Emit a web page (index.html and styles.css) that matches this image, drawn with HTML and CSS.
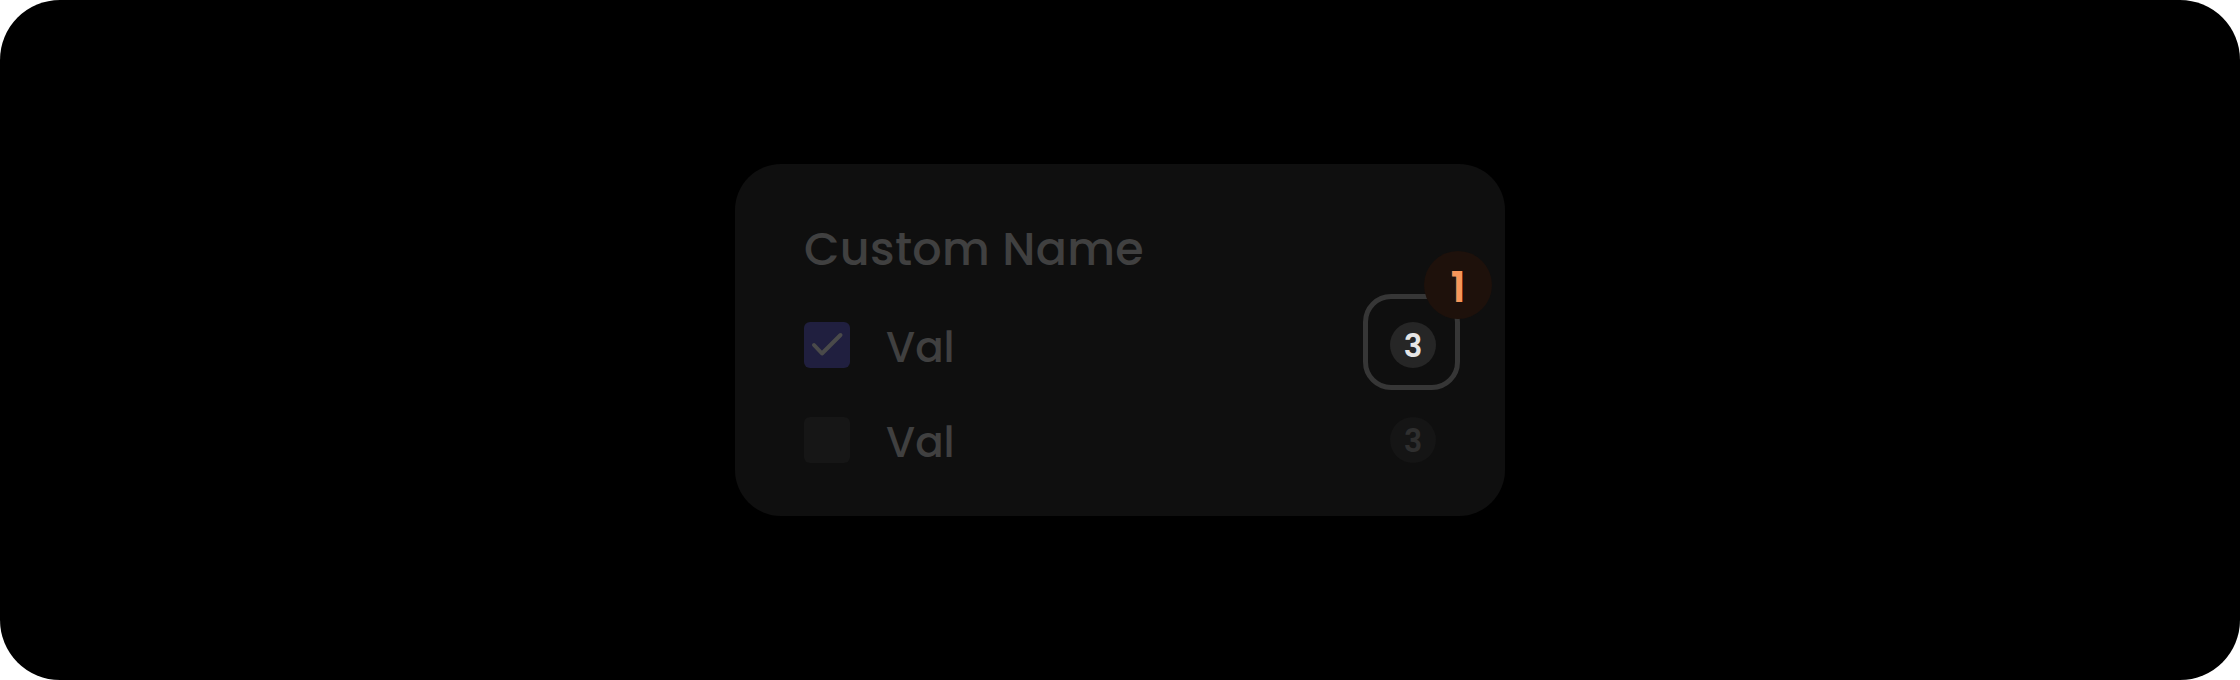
FILE: index.html
```html
<!DOCTYPE html>
<html lang="en">
<head>
  <meta charset="UTF-8" />
  <meta name="viewport" content="width=device-width, initial-scale=1.0"/>
  <title>Custom Name</title>
  <link rel="stylesheet" href="styles.css">
</head>
<body>
  <div class="frame">
    <section class="card">
      <h2 class="card-title">Custom Name</h2>

      <div class="option">
        <span class="check checked">
          <svg viewBox="0 0 46 46" width="46" height="46">
            <path d="M10 23 L18 31.5 L36.5 13" fill="none" stroke="#4a4a4a" stroke-width="4" stroke-linecap="round" stroke-linejoin="round"/>
          </svg>
        </span>
        <span class="option-label">Val</span>
        <span class="count focused">3<span class="badge">1</span></span>
      </div>

      <div class="option">
        <span class="check"></span>
        <span class="option-label">Val</span>
        <span class="count muted">3</span>
      </div>
    </section>
  </div>
</body>
</html>
```

FILE: styles.css
```css
:root {
  --frame: #000;
  --card: #0f0f0f;
  --text: #404040;
  --checked: #201f3f;
  --unchecked: #161616;
}

html, body {
  margin: 0;
  background: #fff;
}

body {
  font-family: 'Poppins', 'Inter', sans-serif;
}

.frame {
  width: 2240px;
  height: 680px;
  background: var(--frame);
  border-radius: 60px;
  display: flex;
  align-items: center;
  justify-content: center;
}

.card {
  width: 770px;
  height: 352px;
  box-sizing: border-box;
  padding: 62px 69px 0;
  background: var(--card);
  border-radius: 46px;
  display: flex;
  flex-direction: column;
}

.card-title {
  margin: 0 0 50px;
  font-size: 46px;
  font-weight: 500;
  line-height: 1;
  color: var(--text);
  letter-spacing: 0.3px;
}

.option {
  display: flex;
  align-items: center;
  height: 46px;
}

.option + .option {
  margin-top: 49px;
}

.check {
  width: 46px;
  height: 46px;
  border-radius: 6px;
  background: var(--unchecked);
  flex-shrink: 0;
}

.check.checked {
  background: var(--checked);
}

.check svg {
  display: block;
}

.option-label {
  margin-left: 36px;
  padding-top: 6px;
  font-size: 42px;
  font-weight: 500;
  line-height: 1;
  color: var(--text);
}

.count {
  margin-left: auto;
  position: relative;
  width: 46px;
  height: 46px;
  border-radius: 50%;
  background: #262626;
  color: #e6e6e6;
  font-size: 31px;
  font-weight: 600;
  line-height: 49px;
  text-align: center;
}

.count.muted {
  background: #151515;
  color: #2f2f2f;
}

.count.focused::before {
  content: '';
  position: absolute;
  left: -27px;
  top: -28px;
  width: 87px;
  height: 86px;
  border: 5px solid #363636;
  border-radius: 28px;
}

.badge {
  position: absolute;
  left: 34px;
  top: -71px;
  width: 68px;
  height: 68px;
  border-radius: 50%;
  background: #1e110b;
  color: #f6965a;
  font-size: 42px;
  font-weight: 600;
  line-height: 74px;
  text-align: center;
}
```
